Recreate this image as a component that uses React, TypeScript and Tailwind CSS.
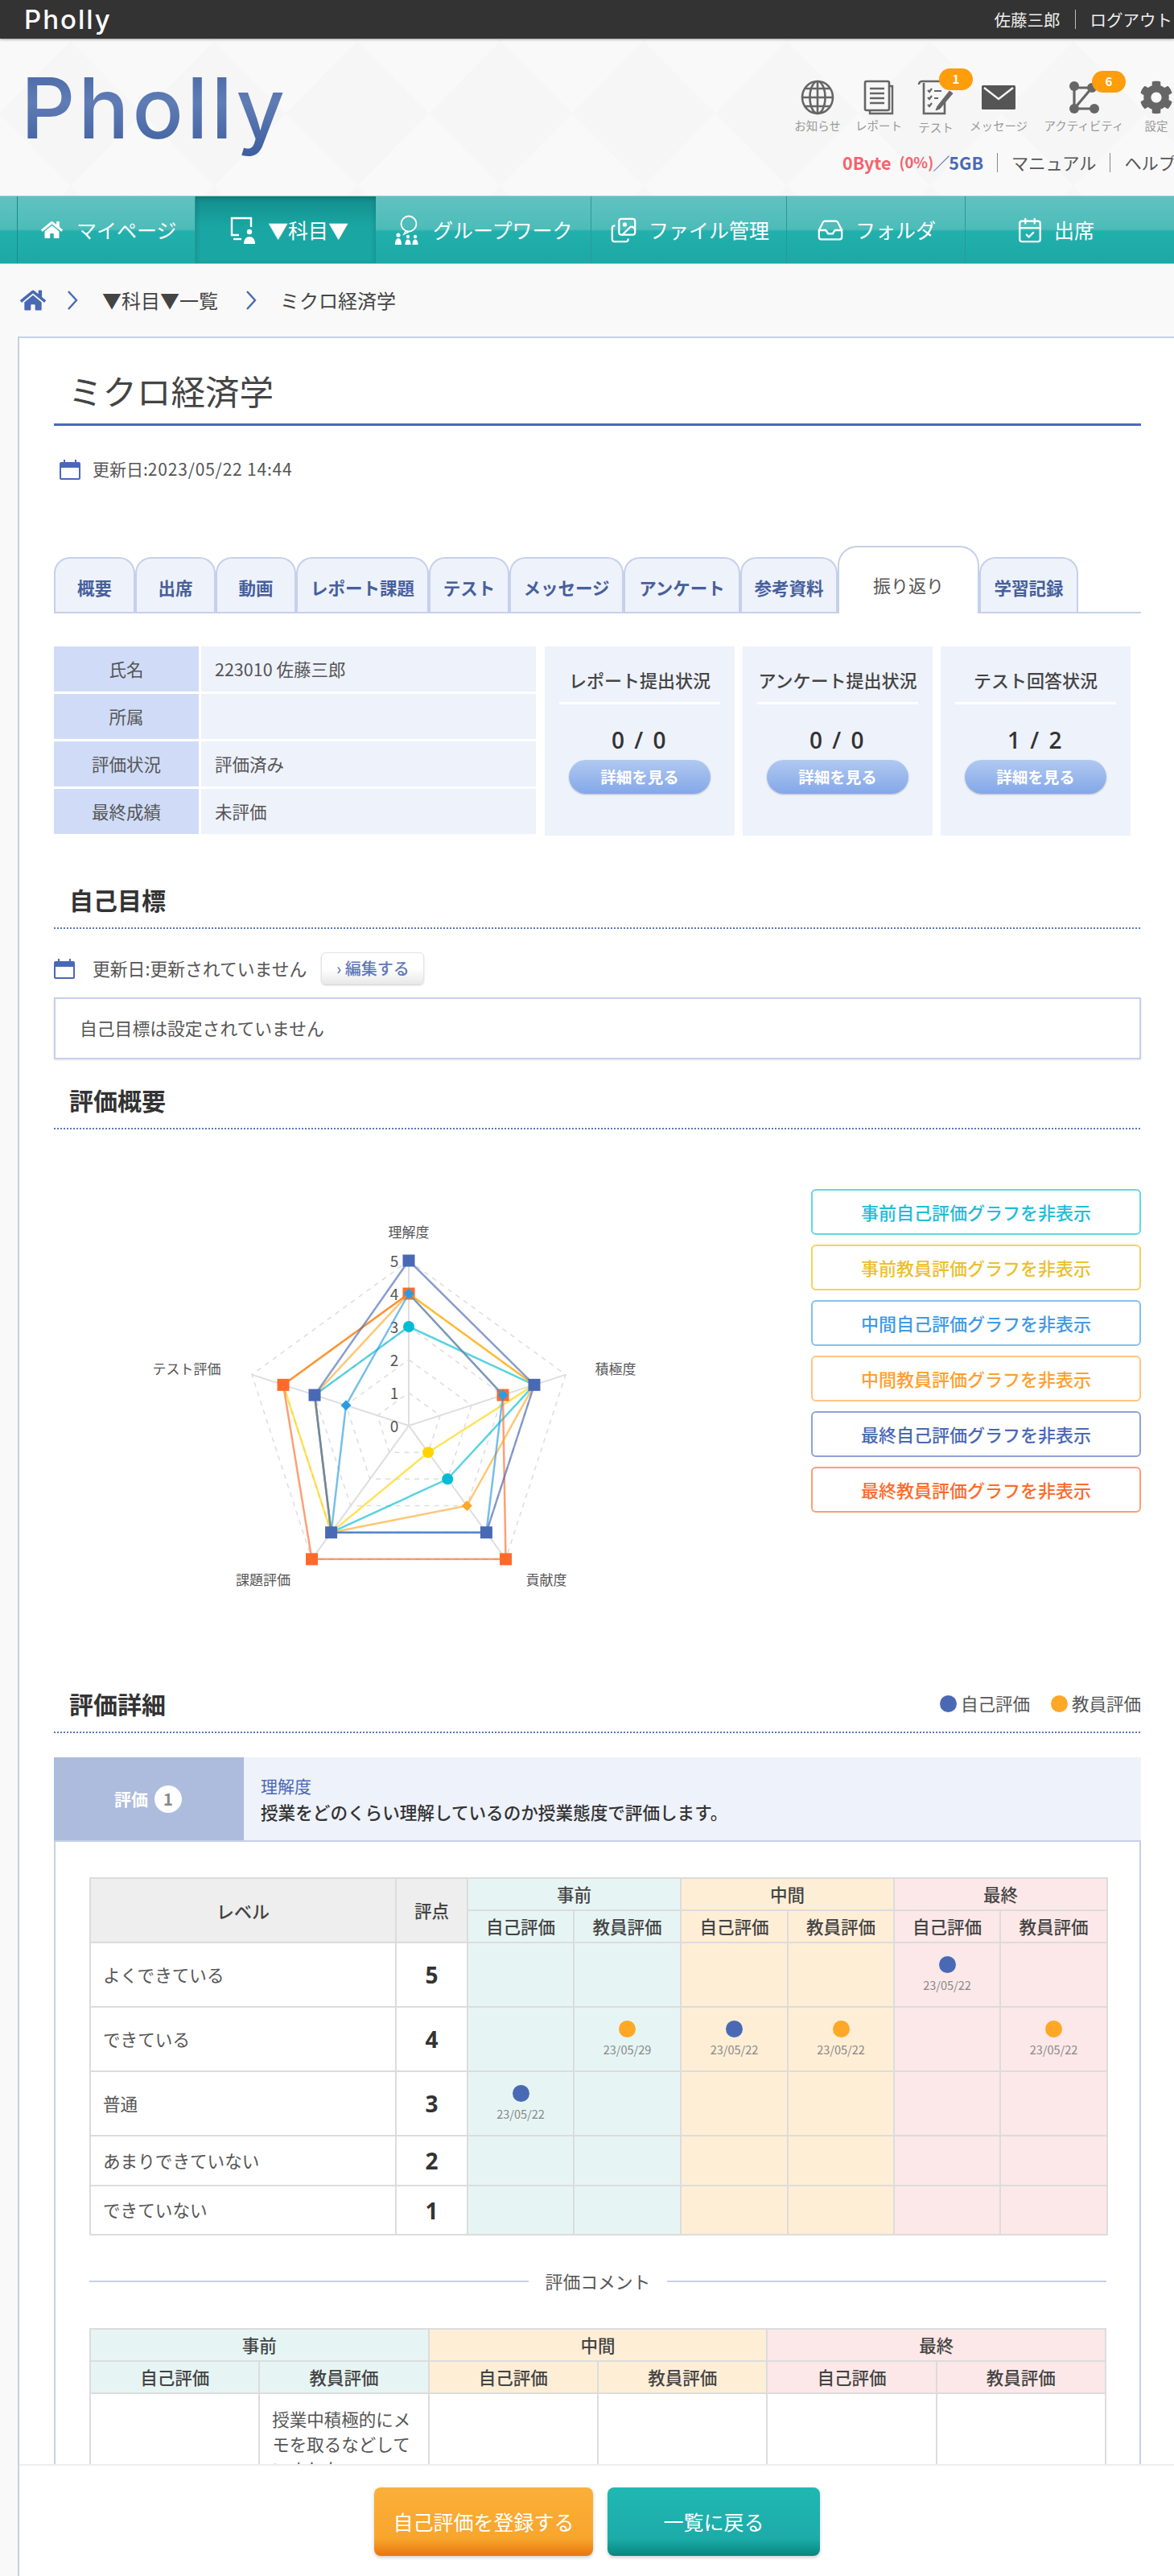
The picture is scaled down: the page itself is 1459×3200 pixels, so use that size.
import React from 'react';
import { Images, Inbox, CalendarCheck } from 'lucide-react';
import { FaCog, FaHome } from 'react-icons/fa';

const navItems = [
  { label: 'マイページ', width: 'w-[221px]', pad: 'pl-[29px]', gap: 'gap-[17px]', icon: <FaHome size={27} /> },
  { label: '▼科目▼', width: 'w-[224px]', pad: 'pl-[42px]', gap: 'gap-[14px]', icon: <MonitorPerson />, active: true },
  { label: 'グループワーク', width: 'w-[268px]', pad: 'pl-[23px]', gap: 'gap-[16px]', icon: <GroupIcon /> },
  { label: 'ファイル管理', width: 'w-[243px]', pad: 'pl-[23px]', gap: 'gap-[14px]', icon: <Images size={34} strokeWidth={1.6} /> },
  { label: 'フォルダ', width: 'w-[222px]', pad: 'pl-[37px]', gap: 'gap-[14px]', icon: <Inbox size={34} strokeWidth={1.6} /> },
  { label: '出席', width: 'flex-1', pad: 'pl-[63px]', gap: 'gap-[13px]', icon: <CalendarCheck size={34} strokeWidth={1.6} /> },
];

const tabs = [
  { label: '概要', width: 'w-[101px]' },
  { label: '出席', width: 'w-[100px]' },
  { label: '動画', width: 'w-[100px]' },
  { label: 'レポート課題', width: 'w-[165px]' },
  { label: 'テスト', width: 'w-[100px]' },
  { label: 'メッセージ', width: 'w-[142px]' },
  { label: 'アンケート', width: 'w-[145px]' },
  { label: '参考資料', width: 'w-[121px]' },
  { label: '振り返り', width: 'w-[176px]', active: true },
  { label: '学習記録', width: 'w-[123px]' },
];

const infoRows = [
  ['氏名', '223010 佐藤三郎'],
  ['所属', ''],
  ['評価状況', '評価済み'],
  ['最終成績', '未評価'],
];

const statusCards = [
  ['レポート提出状況', '0 / 0'],
  ['アンケート提出状況', '0 / 0'],
  ['テスト回答状況', '1 / 2'],
];

const graphButtons = [
  { label: '事前自己評価グラフを非表示', cls: 'border-[#62d6ea] text-[#22bcd8]' },
  { label: '事前教員評価グラフを非表示', cls: 'border-[#f4d25f] text-[#ecc02c]' },
  { label: '中間自己評価グラフを非表示', cls: 'border-[#82c0f0] text-[#3f9be6]' },
  { label: '中間教員評価グラフを非表示', cls: 'border-[#ffc388] text-[#ff9f2e]' },
  { label: '最終自己評価グラフを非表示', cls: 'border-[#8ea3d6] text-[#4a69b5]' },
  { label: '最終教員評価グラフを非表示', cls: 'border-[#ff9c78] text-[#ff6a2b]' },
];

type Mark = { who: 'self' | 'teacher'; date: string } | null;

const levels: { label: string; score: number; height: string; marks: Mark[] }[] = [
  {
    label: 'よくできている',
    score: 5,
    height: 'h-[80px]',
    marks: [null, null, null, null, { who: 'self', date: '23/05/22' }, null],
  },
  {
    label: 'できている',
    score: 4,
    height: 'h-[80px]',
    marks: [
      null,
      { who: 'teacher', date: '23/05/29' },
      { who: 'self', date: '23/05/22' },
      { who: 'teacher', date: '23/05/22' },
      null,
      { who: 'teacher', date: '23/05/22' },
    ],
  },
  {
    label: '普通',
    score: 3,
    height: 'h-[80px]',
    marks: [{ who: 'self', date: '23/05/22' }, null, null, null, null, null],
  },
  { label: 'あまりできていない', score: 2, height: 'h-[62px]', marks: [null, null, null, null, null, null] },
  { label: 'できていない', score: 1, height: 'h-[61px]', marks: [null, null, null, null, null, null] },
];

const phaseBg = ['bg-[#e6f5f4]', 'bg-[#e6f5f4]', 'bg-[#ffeed6]', 'bg-[#ffeed6]', 'bg-[#fce8e8]', 'bg-[#fce8e8]'];
const cellBorder = 'border-2 border-[#dcdcdc]';

// radar chart, page coordinates inside the svg viewBox
const CX = 508;
const CY = 1772;
const UNIT = 41;
const pt = (axis: number, value: number) => {
  const a = (-90 + axis * 72) * (Math.PI / 180);
  return [CX + Math.cos(a) * value * UNIT, CY + Math.sin(a) * value * UNIT];
};
const poly = (values: number[]) => values.map((v, i) => pt(i, v).join(',')).join(' ');

const series = [
  { color: '#00bcd4', shape: 'circle', values: [3, 4, 2, 4, 3] },
  { color: '#ffd400', shape: 'circle', values: [4, 4, 1, 4, 4] },
  { color: '#ff6a2b', shape: 'square', values: [4, 3, 5, 5, 4] },
  { color: '#ffa726', shape: 'diamond', values: [4, 4, 3, 4, 3] },
  { color: '#2b9be3', shape: 'diamond', values: [4, 3, 4, 4, 2] },
  { color: '#4a69b5', shape: 'square', values: [5, 4, 4, 4, 3] },
];

function MonitorPerson() {
  return (
    <svg width="34" height="36" viewBox="0 0 34 36" fill="none">
      <path d="M12 24H3V3h24v11" stroke="white" strokeWidth="2.4" />
      <path d="M5 29h10" stroke="white" strokeWidth="2.4" />
      <circle cx="25" cy="20" r="3.2" fill="white" />
      <path d="M18 35c0-6 3-9 7-9s7 3 7 9z" fill="white" />
    </svg>
  );
}

function GroupIcon() {
  return (
    <svg width="32" height="38" viewBox="0 0 32 38" fill="none">
      <circle cx="18" cy="11" r="9.5" stroke="white" strokeWidth="1.8" />
      <path d="M14 20l-2 4 6-3" stroke="white" strokeWidth="1.6" />
      <circle cx="5" cy="25" r="2.6" fill="white" />
      <path d="M1 37c0-5 1.5-8 4-8s4 3 4 8z" fill="white" />
      <circle cx="17" cy="27" r="2.2" fill="white" />
      <path d="M13.5 37c0-4 1-6.5 3.5-6.5s3.5 2.5 3.5 6.5z" fill="white" />
      <circle cx="26" cy="27" r="2.2" fill="white" />
      <path d="M22.5 37c0-4 1-6.5 3.5-6.5s3.5 2.5 3.5 6.5z" fill="white" />
    </svg>
  );
}

function CalendarIcon() {
  return (
    <svg width="26" height="26" viewBox="0 0 26 26" fill="none" className="shrink-0">
      <rect x="1" y="5" width="24" height="20" stroke="#4a69b5" strokeWidth="2" rx="1" />
      <rect x="1" y="5" width="24" height="6" fill="#4a69b5" />
      <path d="M6 1v6M20 1v6" stroke="#4a69b5" strokeWidth="2" />
    </svg>
  );
}

function GlobeIcon() {
  return (
    <svg width="42" height="44" viewBox="0 0 42 44" fill="none" stroke="#666" strokeWidth="2.6">
      <ellipse cx="21" cy="22" rx="19" ry="20" />
      <ellipse cx="21" cy="22" rx="9.5" ry="20" />
      <path d="M21 2v40M2 22h38M5 11h32M5 33h32" />
    </svg>
  );
}

function ReportIcon() {
  return (
    <svg width="38" height="44" viewBox="0 0 38 44" fill="none" stroke="#666">
      <path d="M8 38v4h28V8h-4" strokeWidth="2.4" />
      <rect x="2" y="2" width="30" height="36" rx="2" strokeWidth="2.6" fill="#f8f8f8" />
      <path d="M8 11h18M8 17h18M8 23h18M8 29h18" strokeWidth="2.4" />
    </svg>
  );
}

function TestIcon() {
  return (
    <svg width="46" height="44" viewBox="0 0 46 44" fill="none" stroke="#666">
      <path d="M2 6c0-3 2-4 4-4h24v4M8 4v38h26V28" strokeWidth="2.6" />
      <path d="M13 13l2 2 3-4M13 22l2 2 3-4M13 31l2 2 3-4M21 14h9M21 23h5" strokeWidth="2.2" />
      <path d="M25 33l-2 5 5-2 16-19-4-3z" fill="#666" strokeWidth="1" />
    </svg>
  );
}

function MailIcon() {
  return (
    <svg width="42" height="30" viewBox="0 0 42 30">
      <rect width="42" height="30" rx="1.5" fill="#555" />
      <path d="M3 3l18 14L39 3" fill="none" stroke="#f8f8f8" strokeWidth="2.4" />
    </svg>
  );
}

function ActivityIcon() {
  return (
    <svg width="40" height="42" viewBox="0 0 40 42" fill="none">
      <path d="M8 7v28M8 35L30 9M30 9h-22M8 35h26" stroke="#666" strokeWidth="3.2" />
      <circle cx="8" cy="7" r="6" fill="#666" />
      <circle cx="8" cy="35" r="6" fill="#666" />
      <circle cx="33" cy="35" r="6" fill="#666" />
      <circle cx="30" cy="9" r="6" fill="#666" />
    </svg>
  );
}

function Chevron() {
  return (
    <svg width="14" height="26" viewBox="0 0 14 26" fill="none" className="shrink-0">
      <path d="M2 2l10 11L2 24" stroke="#4a69b5" strokeWidth="2.4" />
    </svg>
  );
}

function SectionHeading({ text, className, children }: { text: string; className?: string; children?: React.ReactNode }) {
  return (
    <div className={className}>
      <div className="flex items-center justify-between pl-[19px] pb-[15px]">
        <h2 className="text-[30px] leading-[40px] font-bold text-[#333]">{text}</h2>
        {children}
      </div>
      <div className="h-[2px] bg-[repeating-linear-gradient(90deg,#5a76bd_0_2px,transparent_2px_4px)]" />
    </div>
  );
}

function RadarChart() {
  const axisLabels = [
    { text: '理解度', x: 508, y: 1538 },
    { text: '積極度', x: 765, y: 1708 },
    { text: '貢献度', x: 679, y: 1970 },
    { text: '課題評価', x: 327, y: 1970 },
    { text: 'テスト評価', x: 232, y: 1708 },
  ];
  return (
    <svg width="941" height="693" viewBox="67 1404 941 693" className="shrink-0">
      {[1, 2, 3, 4, 5].map((lv) => (
        <polygon key={lv} points={poly([lv, lv, lv, lv, lv])} fill="none" stroke="#dddddd" strokeWidth="1.5" strokeDasharray="6 6" />
      ))}
      {[0, 1, 2, 3, 4].map((i) => {
        const [x, y] = pt(i, 5);
        return <line key={i} x1={CX} y1={CY} x2={x} y2={y} stroke="#dedede" strokeWidth="2" />;
      })}
      {[0, 1, 2, 3, 4, 5].map((v) => (
        <text key={v} x={490} y={CY - v * UNIT + 8} textAnchor="middle" fontSize="19" fill="#555">
          {v}
        </text>
      ))}
      {series.map((s) => (
        <g key={s.color}>
          <polygon points={poly(s.values)} fill="none" stroke={s.color} strokeWidth="2.5" strokeOpacity="0.65" />
          {s.values.map((v, i) => {
            const [x, y] = pt(i, v);
            if (s.shape === 'circle') return <circle key={i} cx={x} cy={y} r="7" fill={s.color} />;
            if (s.shape === 'square') return <rect key={i} x={x - 7.5} y={y - 7.5} width="15" height="15" fill={s.color} />;
            return <polygon key={i} points={`${x},${y - 6.5} ${x + 6.5},${y} ${x},${y + 6.5} ${x - 6.5},${y}`} fill={s.color} />;
          })}
        </g>
      ))}
      {axisLabels.map((l) => (
        <text key={l.text} x={l.x} y={l.y} textAnchor="middle" fontSize="17" fill="#555">
          {l.text}
        </text>
      ))}
    </svg>
  );
}

export default function App() {
  return (
    <div className="relative w-[1459px] h-[3200px] overflow-hidden bg-[#f9f9f9] text-[#555] font-['Noto_Sans_CJK_JP','Noto_Sans',sans-serif]">
      <header className="relative z-10 flex h-[48px] items-center justify-between bg-[#333] pl-[30px] pr-[2px] shadow-[0_1px_3px_rgba(0,0,0,0.4)]">
        <span className="text-[33px] leading-none font-medium tracking-[2px] text-white font-['Inter',sans-serif]">Pholly</span>
        <div className="flex items-center text-[20.500px] text-[#eee]">
          <span>佐藤三郎</span>
          <span className="mx-[18px] h-[24px] w-px bg-[#bbb]" />
          <span>ログアウト</span>
        </div>
      </header>

      <div className="relative flex h-[195px] overflow-hidden bg-[#f9f9f9]">
        <svg className="absolute inset-0" width="1459" height="195">
          <defs>
            <pattern id="diamonds" width="178" height="180" patternUnits="userSpaceOnUse" x="-1" y="3">
              <polygon points="89,0 178,90 89,180 0,90" fill="#f6f6f6" />
            </pattern>
          </defs>
          <rect width="1459" height="195" fill="url(#diamonds)" />
        </svg>
        <div className="relative w-[978px] shrink-0 pl-[26px] pt-[16px]">
          <span className="block bg-[linear-gradient(180deg,#3f5f9f,#5f7cb5_45%,#38599b)] bg-clip-text text-[105px] leading-[140px] font-medium tracking-[4px] text-transparent font-['Inter',sans-serif]">
            Pholly
          </span>
        </div>
        <div className="relative w-[481px] shrink-0">
          <div className="flex pt-[50px] text-[14.500px] text-[#999]">
            <div className="flex w-[76px] shrink-0 flex-col items-center">
              <div className="flex h-[46px] items-center">
                <GlobeIcon />
              </div>
              <span className="mt-[1px] whitespace-nowrap">お知らせ</span>
            </div>
            <div className="flex w-[76px] shrink-0 flex-col items-center">
              <div className="flex h-[46px] items-center">
                <ReportIcon />
              </div>
              <span className="mt-[1px] whitespace-nowrap">レポート</span>
            </div>
            <div className="relative flex w-[66px] shrink-0 flex-col items-center">
              <div className="flex h-[46px] items-center">
                <TestIcon />
              </div>
              <span className="mt-[3px] whitespace-nowrap">テスト</span>
              <span className="absolute left-[37px] top-[-13px] flex h-[27px] w-[42px] items-center justify-center rounded-full bg-[#ff9d0a] text-[15px] font-bold text-white">
                1
              </span>
            </div>
            <div className="flex w-[90px] shrink-0 flex-col items-center">
              <div className="flex h-[46px] items-center">
                <MailIcon />
              </div>
              <span className="mt-[1px] whitespace-nowrap">メッセージ</span>
            </div>
            <div className="relative flex w-[122px] shrink-0 flex-col items-center">
              <div className="flex h-[46px] items-center">
                <ActivityIcon />
              </div>
              <span className="mt-[1px] whitespace-nowrap">アクティビティ</span>
              <span className="absolute left-[71px] top-[-10px] flex h-[27px] w-[42px] items-center justify-center rounded-full bg-[#ff9d0a] text-[15px] font-bold text-white">
                6
              </span>
            </div>
            <div className="flex w-[58px] shrink-0 flex-col items-center">
              <div className="flex h-[46px] items-center">
                <FaCog size={42} color="#666" />
              </div>
              <span className="mt-[1px] whitespace-nowrap">設定</span>
            </div>
          </div>
          <div className="mt-[18px] flex h-[30px] items-center whitespace-nowrap pl-[69px] text-[21.200px]">
            <span className="shrink-0 text-[21.500px] font-bold text-[#f4626c]">0Byte</span>
            <span className="ml-[10px] shrink-0 text-[18.500px] font-bold text-[#f4626c]">(0%)</span>
            <span className="-mx-[1px] shrink-0 text-[#4a69b5]">／</span>
            <span className="shrink-0 text-[21.500px] font-bold text-[#4a69b5]">5GB</span>
            <span className="mx-[17px] h-[24px] w-px shrink-0 bg-[#888]" />
            <span className="shrink-0">マニュアル</span>
            <span className="mx-[17px] h-[24px] w-px shrink-0 bg-[#888]" />
            <span className="shrink-0">ヘルプ</span>
          </div>
        </div>
      </div>

      <nav className="flex h-[85px] border-y border-[#8fd3d1] bg-[linear-gradient(180deg,#61c2c0_0%,#4cbcb9_49%,#22b0ad_52%,#1ca9a6_100%)] text-[25px] text-white">
        <div className="w-[22px] border-r border-[#168c8a]" />
        {navItems.map((item) => (
          <div
            key={item.label}
            className={`flex items-center whitespace-nowrap ${item.width} ${item.pad} ${item.gap} ${
              item.active
                ? 'bg-[linear-gradient(180deg,#138e8b_0%,#1aa6a3_45%,#1aa6a3_100%)] shadow-[inset_0_2px_6px_rgba(0,0,0,0.2)]'
                : 'border-r border-[#2a9896] last:border-r-0'
            }`}
          >
            {item.icon}
            <span>{item.label}</span>
          </div>
        ))}
      </nav>

      <div className="flex h-[90px] items-center pl-[25px] text-[24px] text-[#444]">
        <FaHome size={32} color="#4a69b5" />
        <span className="ml-[26px]">
          <Chevron />
        </span>
        <span className="ml-[30px]">▼科目▼一覧</span>
        <span className="ml-[34px]">
          <Chevron />
        </span>
        <span className="ml-[29px]">ミクロ経済学</span>
      </div>

      <main className="ml-[22px] border-l-2 border-t-2 border-[#c5d0ea] bg-white pl-[43px] pr-[41px]">
        <h1 className="flex h-[109px] items-end border-b-[3px] border-[#4a69b5] pb-[20px] pl-[18px] text-[42.500px] leading-[42px] text-[#444]">
          ミクロ経済学
        </h1>

        <div className="mt-[41px] flex h-[26px] items-center gap-[15px] pl-[7px] text-[21px]">
          <CalendarIcon />
          <span>
            更新日:<span className="tracking-[0.8px]">2023/05/22 14:44</span>
          </span>
        </div>

        <div className="mt-[84px] flex h-[82px] items-end border-b-2 border-[#c5d0ea]">
          {tabs.map((tab) =>
            tab.active ? (
              <div
                key={tab.label}
                className={`${tab.width} -mb-[2px] flex h-[84px] items-start justify-center rounded-t-[24px] border-2 border-b-0 border-[#c5d0ea] bg-white pt-[30px] text-[22px] leading-[32px]`}
              >
                {tab.label}
              </div>
            ) : (
              <div
                key={tab.label}
                className={`${tab.width} flex h-[68px] items-center justify-center rounded-t-[20px] border-2 border-b-0 border-[#c5d0ea] bg-[#eef2fb] pt-[6px] text-[21.500px] font-bold text-[#47609b]`}
              >
                {tab.label}
              </div>
            ),
          )}
        </div>

        <div className="mt-[41px] flex h-[235px]">
          <div className="flex w-[599px] flex-col gap-[3px] text-[21.500px]">
            {infoRows.map(([label, value]) => (
              <div key={label} className="flex h-[56px] gap-[3px]">
                <div className="flex w-[180px] items-center justify-center bg-[#d0dcf7]">{label}</div>
                <div className="flex flex-1 items-center bg-[#eef2fb] pl-[17px]">{value}</div>
              </div>
            ))}
          </div>
          <div className="ml-[11px] flex gap-[10px]">
            {statusCards.map(([title, value]) => (
              <div key={title} className="w-[236px] bg-[#eef2fb] pt-[26px]">
                <div className="h-[30px] text-center text-[22px] leading-[30px] font-medium whitespace-nowrap text-[#444]">{title}</div>
                <div className="mx-[18px] mt-[13px] h-[3px] bg-white" />
                <div className="mt-[24px] h-[40px] text-center text-[28px] leading-[40px] font-semibold tracking-[2.500px] text-[#333] font-['Open_Sans',sans-serif]">
                  {value}
                </div>
                <div className="mx-auto mt-[5px] flex h-[42px] w-[176px] items-center justify-center rounded-full bg-[linear-gradient(180deg,#b0c9f0,#84a7e9)] text-[19.500px] font-bold text-white shadow-[0_1px_2px_rgba(0,0,0,0.25)]">
                  詳細を見る
                </div>
              </div>
            ))}
          </div>
        </div>

        <SectionHeading text="自己目標" className="mt-[59px]" />

        <div className="mt-[29px] flex h-[40px] items-center text-[21.800px]">
          <CalendarIcon />
          <span className="ml-[22px] whitespace-nowrap">更新日:更新されていません</span>
          <div className="ml-[18px] flex h-[40px] w-[128px] items-center justify-center rounded-[6px] border border-[#e4e4e4] bg-[linear-gradient(180deg,#ffffff_50%,#e9e9e9)] text-[20px] font-medium text-[#5f78b8] shadow-[0_1px_2px_rgba(0,0,0,0.2)]">
            › 編集する
          </div>
        </div>

        <div className="mt-[16px] flex h-[77px] items-center border-2 border-[#c5d0ea] pl-[30px] text-[21.800px] shadow-[0_1px_3px_rgba(0,0,0,0.1)]">
          自己目標は設定されていません
        </div>

        <SectionHeading text="評価概要" className="mt-[30px]" />

        <div className="flex h-[693px]">
          <RadarChart />
          <div className="flex flex-1 flex-col gap-[12px] pt-[74px]">
            {graphButtons.map((b) => (
              <div
                key={b.label}
                className={`flex h-[57px] items-center justify-center rounded-[6px] border-2 bg-white text-[22px] font-medium whitespace-nowrap ${b.cls}`}
              >
                {b.label}
              </div>
            ))}
          </div>
        </div>

        <SectionHeading text="評価詳細">
          <div className="flex items-center text-[21.500px]">
            <span className="h-[21px] w-[21px] rounded-full bg-[#4a69b5]" />
            <span className="ml-[5px]">自己評価</span>
            <span className="ml-[26px] h-[21px] w-[21px] rounded-full bg-[#ffa726]" />
            <span className="ml-[5px]">教員評価</span>
          </div>
        </SectionHeading>

        <div className="mt-[30px] flex h-[105px] border-b-2 border-[#c5d0ea] bg-[#eef2fb]">
          <div className="flex w-[236px] items-center pl-[75px] bg-[#adbcdd]">
            <span className="text-[21px] font-bold text-white">評価</span>
            <span className="ml-[8px] flex h-[34px] w-[34px] items-center justify-center rounded-full bg-white text-[20px] font-bold text-[#888]">
              1
            </span>
          </div>
          <div className="pl-[21px] pt-[19px]">
            <div className="text-[21px] leading-[32px] text-[#4a69b5]">理解度</div>
            <div className="text-[21.600px] leading-[34px] font-medium whitespace-nowrap text-[#333]">
              授業をどのくらい理解しているのか授業態度で評価します。
            </div>
          </div>
        </div>

        <div className="border-x-2 border-[#c5d0ea] pl-[42px] pr-[41px] pt-[44px]">
          <table className="w-[1264px] table-fixed border-collapse">
            <colgroup>
              <col className="w-[380px]" />
              <col className="w-[89px]" />
              <col className="w-[132px]" />
              <col className="w-[133px]" />
              <col className="w-[133px]" />
              <col className="w-[132px]" />
              <col className="w-[132px]" />
              <col className="w-[133px]" />
            </colgroup>
            <thead className="text-[21.500px] font-medium text-[#444]">
              <tr className="h-[40px]">
                <th rowSpan={2} className={`${cellBorder} bg-[#eeeeee] text-[22px] font-medium`}>
                  レベル
                </th>
                <th rowSpan={2} className={`${cellBorder} bg-[#eeeeee] font-medium`}>
                  評点
                </th>
                <th colSpan={2} className={`${cellBorder} bg-[#e6f5f4] font-medium`}>
                  事前
                </th>
                <th colSpan={2} className={`${cellBorder} bg-[#ffeed6] font-medium`}>
                  中間
                </th>
                <th colSpan={2} className={`${cellBorder} bg-[#fce8e8] font-medium`}>
                  最終
                </th>
              </tr>
              <tr className="h-[40px]">
                {phaseBg.map((bg, i) => (
                  <th key={i} className={`${cellBorder} ${bg} font-medium`}>
                    {i % 2 === 0 ? '自己評価' : '教員評価'}
                  </th>
                ))}
              </tr>
            </thead>
            <tbody>
              {levels.map((row) => (
                <tr key={row.score} className={row.height}>
                  <td className={`${cellBorder} pl-[15px] text-[21.600px]`}>{row.label}</td>
                  <td className={`${cellBorder} text-center text-[28px] font-bold text-[#333] font-['Open_Sans',sans-serif]`}>{row.score}</td>
                  {row.marks.map((mark, i) => (
                    <td key={i} className={`${cellBorder} ${phaseBg[i]}`}>
                      {mark && (
                        <div className="flex flex-col items-center">
                          <span className={`h-[21px] w-[21px] rounded-full ${mark.who === 'self' ? 'bg-[#4a69b5]' : 'bg-[#ffa726]'}`} />
                          <span className="mt-[5px] text-[14.500px] leading-[20px] text-[#888]">{mark.date}</span>
                        </div>
                      )}
                    </td>
                  ))}
                </tr>
              ))}
            </tbody>
          </table>

          <div className="mt-[46px] flex h-[22px] items-center">
            <span className="h-[2px] flex-1 bg-[#c5d0ea]" />
            <span className="mx-[21px] text-[21.800px] leading-[22px] whitespace-nowrap">評価コメント</span>
            <span className="h-[2px] flex-1 bg-[#c5d0ea]" />
          </div>

          <table className="mt-[47px] w-[1264px] table-fixed border-collapse">
            <thead className="text-[21.500px] font-medium text-[#444]">
              <tr className="h-[40px]">
                <th colSpan={2} className={`${cellBorder} bg-[#e6f5f4] font-medium`}>
                  事前
                </th>
                <th colSpan={2} className={`${cellBorder} bg-[#ffeed6] font-medium`}>
                  中間
                </th>
                <th colSpan={2} className={`${cellBorder} bg-[#fce8e8] font-medium`}>
                  最終
                </th>
              </tr>
              <tr className="h-[40px]">
                {phaseBg.map((bg, i) => (
                  <th key={i} className={`${cellBorder} ${bg} font-medium`}>
                    {i % 2 === 0 ? '自己評価' : '教員評価'}
                  </th>
                ))}
              </tr>
            </thead>
            <tbody>
              <tr>
                <td className={cellBorder} />
                <td className={`${cellBorder} px-[15px] pt-[15px] pb-[30px] align-top text-[21.500px] leading-[31px]`}>
                  授業中積極的にメモを取るなどしていました。
                </td>
                <td className={cellBorder} />
                <td className={cellBorder} />
                <td className={cellBorder} />
                <td className={cellBorder} />
              </tr>
            </tbody>
          </table>
          <div className="h-[200px]" />
        </div>
      </main>

      <footer className="absolute bottom-0 left-[24px] right-0 flex h-[139px] gap-[18px] border-t-2 border-[#eeeeee] bg-white pl-[441px] pt-[27px] text-[25px] text-white">
        <div className="flex h-[85px] w-[272px] items-center justify-center rounded-[8px] bg-[linear-gradient(180deg,#fbb03b_0%,#f8a52c_75%,#e9750e_100%)] shadow-[0_2px_4px_rgba(0,0,0,0.2)]">
          自己評価を登録する
        </div>
        <div className="flex h-[85px] w-[264px] items-center justify-center rounded-[8px] bg-[linear-gradient(180deg,#20b8b4_0%,#1dabA8_75%,#068680_100%)] shadow-[0_2px_4px_rgba(0,0,0,0.2)]">
          一覧に戻る
        </div>
      </footer>
    </div>
  );
}
